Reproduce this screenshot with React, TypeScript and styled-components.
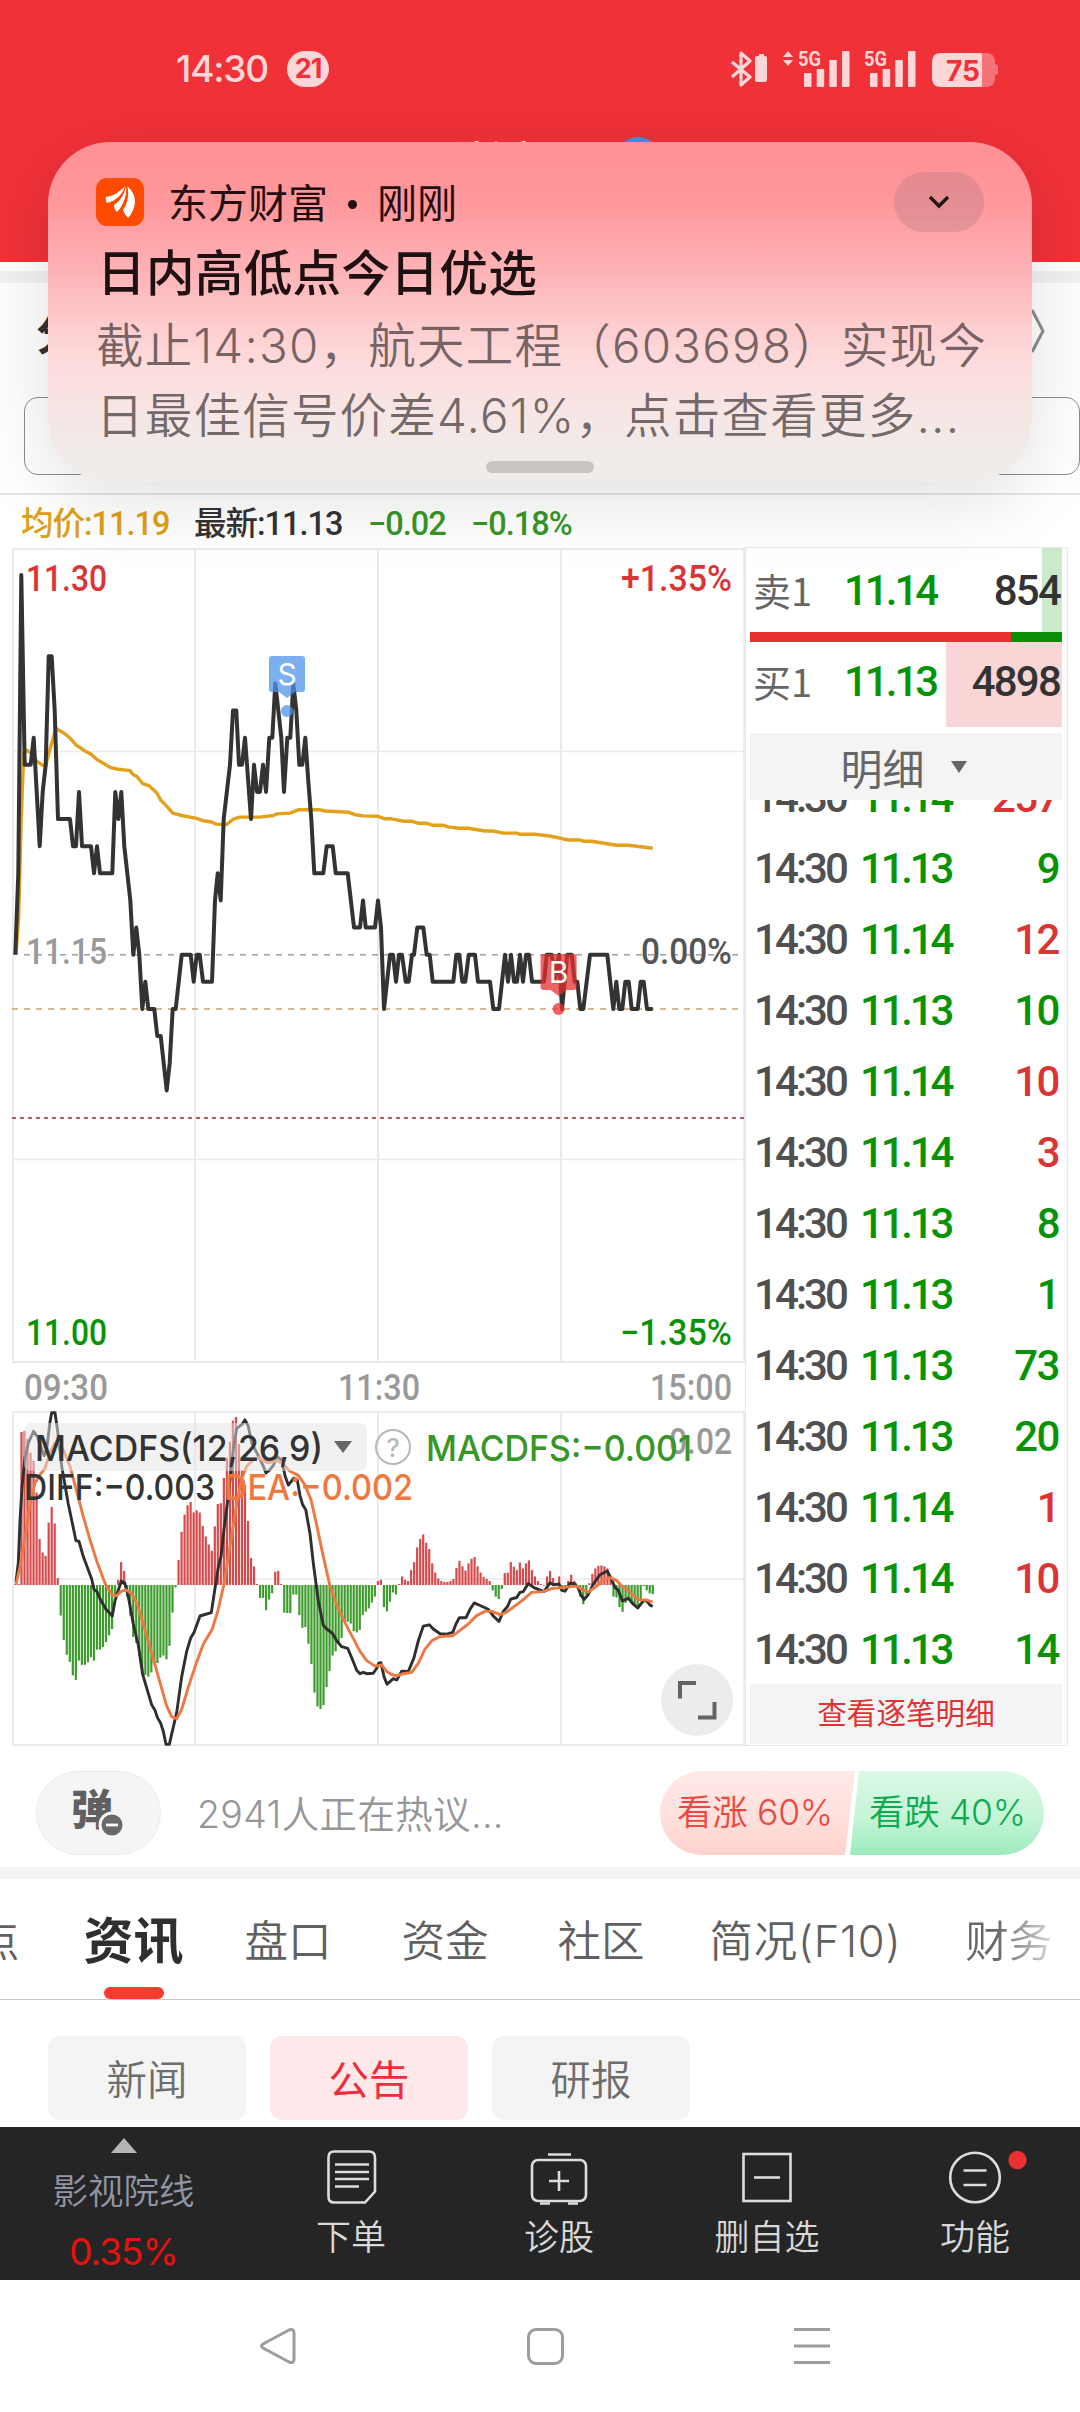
import React from "react";
import styled, { createGlobalStyle } from "styled-components";

const UI = `Inter, "Noto Sans CJK SC", sans-serif`;
const CJK = `"Noto Sans CJK SC", sans-serif`;
const NUM = `Roboto, "Noto Sans CJK SC", sans-serif`;

const RED = "#dc3434";
const GREEN = "#069406";

const Global = createGlobalStyle`
  html, body { margin: 0; padding: 0; background: #fff; }
  *, *::before, *::after { box-sizing: border-box; }
`;

const Screen = styled.div`
  position: relative;
  width: 1080px;
  height: 2412px;
  overflow: hidden;
  display: flex;
  flex-direction: column;
  background: #fff;
  font-family: ${UI};
`;

/* ---------- red header with status bar ---------- */

const Header = styled.header`
  height: 262px;
  flex: none;
  display: flex;
  flex-direction: column;
  background: #f13138;
`;

const StatusBar = styled.div`
  height: 137px;
  display: flex;
  align-items: center;
  justify-content: space-between;
  padding: 0 80px 0 176px;
`;

const StatusLeft = styled.div`
  display: flex;
  align-items: center;
  gap: 19px;
`;

const Clock = styled.span`
  font: 500 37px/44px ${UI};
  letter-spacing: -1.2px;
  color: #fdd6d8;
`;

const CountBadge = styled.span`
  width: 42px;
  height: 36px;
  border-radius: 18px;
  background: #fdd6d8;
  color: #f13138;
  font: 700 27px/36px ${UI};
  letter-spacing: -1px;
  text-align: center;
`;

const StockTitle = styled.div`
  display: flex;
  align-items: flex-start;
  justify-content: center;
  gap: 26px;
  padding-left: 38px;
  color: #fff;
  font: 500 44px/46px ${CJK};
`;

const BlueDot = styled.i`
  width: 44px;
  height: 44px;
  border-radius: 50%;
  background: #4a8fe8;
`;

/* ---------- period row hidden under the notification ---------- */

const Strip = styled.div<{ $h: number; $c: string }>`
  height: ${(p) => p.$h}px;
  flex: none;
  background: ${(p) => p.$c};
`;

const SectionRow = styled.div`
  height: 114px;
  flex: none;
  display: flex;
  align-items: center;
  justify-content: space-between;
  padding: 0 34px 18px 36px;
  color: #333;
  font: 700 44px/60px ${CJK};
`;

const PeriodBox = styled.div`
  height: 78px;
  flex: none;
  margin-left: 24px;
  border: 1.5px solid #8d8d8d;
  border-radius: 14px;
`;

const InfoRow = styled.div`
  height: 54px;
  margin-top: 18px;
  flex: none;
  border-top: 2px solid #e6e6e6;
  display: flex;
  align-items: center;
  padding: 6px 0 0 21px;
  font: 500 32.5px/40px ${NUM};
`;

const InfoItem = styled.span<{ $c: string; $w: number }>`
  width: ${(p) => p.$w}px;
  color: ${(p) => p.$c};
  letter-spacing: -1px;
  white-space: nowrap;
`;

/* ---------- notification ---------- */

const Notice = styled.section`
  position: absolute;
  left: 48px;
  top: 142px;
  width: 984px;
  height: 340px;
  border-radius: 62px;
  padding: 30px 48px 9px;
  display: flex;
  flex-direction: column;
  background: linear-gradient(
    180deg,
    #ff9095 0%,
    #fe989c 18%,
    #fea7ab 30%,
    #fdb9bc 42%,
    #fdcdcf 54%,
    #fddcdd 66%,
    #f7e5e4 78%,
    #f1eae8 88%,
    #efedeb 100%
  );
  box-shadow: 0 16px 76px rgba(0, 0, 0, 0.13);
`;

const NoticeHead = styled.div`
  display: flex;
  align-items: center;
  height: 60px;
`;

const AppName = styled.span`
  margin: -3px 0 0 24px;
  flex: 1;
  font: 400 40px/56px ${CJK};
  color: #240e0f;
  white-space: pre;
`;

const Dot = styled.i`
  display: inline-block;
  width: 9px;
  height: 9px;
  border-radius: 50%;
  background: #240e0f;
  margin: 0 20px 9px 20px;
`;

const Expand = styled.button`
  width: 90px;
  height: 60px;
  border: 0;
  border-radius: 30px;
  background: rgba(170, 120, 125, 0.3);
  display: flex;
  align-items: center;
  justify-content: center;
  padding: 0;
`;

const NoticeTitle = styled.div`
  height: 78px;
  font: 500 48.6px/76px ${CJK};
  letter-spacing: 0.3px;
  padding-left: 1px;
  color: #1f1012;
`;

const NoticeLine = styled.div`
  height: 70px;
  font: 350 47.5px/72px ${UI};
  letter-spacing: 1.22px;
  color: rgba(50, 40, 40, 0.68);
  white-space: nowrap;
`;

const Handle = styled.div`
  width: 108px;
  height: 12px;
  border-radius: 6px;
  margin: auto auto 0;
  background: #c9c6c4;
`;

/* ---------- market area ---------- */

const Market = styled.div`
  flex: none;
  display: flex;
  height: 1199px;
`;

const Charts = styled.div`
  width: 745px;
  flex: none;
`;

const Book = styled.aside`
  width: 323px;
  border: 1px solid #e8e8e8;
  display: flex;
  flex-direction: column;
  padding: 0 5px 0 4px;
`;

const QuoteRow = styled.div<{ $fill: number; $tint: string; $h: number; $pb: number }>`
  height: ${(p) => p.$h}px;
  flex: none;
  display: flex;
  align-items: center;
  justify-content: space-between;
  padding: 1px 2px ${(p) => p.$pb}px 3px;
  background: linear-gradient(${(p) => p.$tint}, ${(p) => p.$tint}) right / ${(p) => p.$fill}px 100% no-repeat;
  font: 500 42px/50px ${NUM};
  letter-spacing: -1.8px;
  color: #333;
`;

const Side = styled.span`
  width: 91px;
  margin-top: -2px;
  font: 400 38px/50px ${CJK};
  letter-spacing: 0;
  color: #666;
`;

const QuotePrice = styled.span`
  flex: 1;
  letter-spacing: -3px;
  color: ${GREEN};
`;

const Ratio = styled.div`
  height: 10px;
  flex: none;
  display: flex;
  background: #0a8f06;
  &::before {
    content: "";
    width: 261px;
    background: #e83030;
  }
`;

const DetailHead = styled.div`
  height: 67px;
  margin-top: 6px;
  flex: none;
  background: #f4f4f4;
  color: #666;
  display: flex;
  align-items: center;
  justify-content: center;
  gap: 26px;
  padding-right: 5px;
  font: 400 42px/60px ${CJK};
`;

const Caret = styled.i`
  border: 8.5px solid transparent;
  border-top: 12px solid #666;
  border-bottom: 0;
`;

const Ticks = styled.div`
  flex: 1;
  overflow: hidden;
  display: flex;
  flex-direction: column;
  justify-content: flex-end;
`;

const Tick = styled.div`
  height: 71px;
  flex: none;
  display: flex;
  align-items: center;
  padding: 2px 3px 0 4px;
  font: 500 42px/50px ${NUM};
  letter-spacing: -1.5px;
  color: #505050;
`;

const TickTime = styled.span`
  width: 106px;
  letter-spacing: -2.9px;
`;

const TickPrice = styled.span`
  flex: 1;
  letter-spacing: -3.2px;
  color: ${GREEN};
`;

const TickQty = styled.span<{ $up: boolean }>`
  color: ${(p) => (p.$up ? RED : GREEN)};
`;

const BookFoot = styled.div`
  height: 60px;
  margin-bottom: 1px;
  flex: none;
  background: #f4f4f4;
  color: ${RED};
  text-align: center;
  font: 400 29.6px/56px ${CJK};
`;

/* ---------- discussion bar ---------- */

const Talk = styled.div`
  flex: none;
  height: 121px;
  padding: 25px 36px 0;
  display: flex;
`;

const BulletButton = styled.div`
  width: 125px;
  height: 84px;
  border-radius: 42px;
  border: 1px solid #ececec;
  background: #f5f5f5;
  display: flex;
  padding: 11px 0 0 29px;
`;

const TalkText = styled.div`
  flex: 1;
  padding-left: 36px;
  font: 350 37.5px/88px ${UI};
  letter-spacing: 0.35px;
  color: #969696;
`;

const Votes = styled.div`
  width: 384px;
  height: 84px;
  display: flex;
`;

const Vote = styled.div<{ $up?: boolean }>`
  width: 195px;
  height: 84px;
  flex: none;
  margin-left: ${(p) => (p.$up ? 0 : -6)}px;
  border-radius: ${(p) => (p.$up ? "42px 0 0 42px" : "0 42px 42px 0")};
  clip-path: ${(p) =>
    p.$up ? "polygon(0 0, 100% 0, 185px 100%, 0 100%)" : "polygon(10px 0, 100% 0, 100% 100%, 1px 100%)"};
  background: ${(p) =>
    p.$up ? "linear-gradient(#ffeae8, #ffe0dd 55%, #ffd1cc)" : "linear-gradient(#dbf9e6, #c6f4d7 55%, #9cebbd)"};
  color: ${(p) => (p.$up ? "#ee473f" : "#0dab4f")};
  padding-left: ${(p) => (p.$up ? 17 : 20)}px;
  font: 350 35.5px/84px ${UI};
  letter-spacing: -0.3px;
  white-space: nowrap;
`;

/* ---------- tabs ---------- */

const Tabs = styled.nav`
  height: 121px;
  flex: none;
  display: flex;
  border-bottom: 1.5px solid #c8c8c8;
  overflow: hidden;
`;

const Tab = styled.div<{ $ml: number; $active?: boolean; $fade?: boolean }>`
  margin-left: ${(p) => p.$ml}px;
  flex: none;
  display: flex;
  flex-direction: column;
  align-items: center;
  justify-content: space-between;
  white-space: nowrap;
  font: ${(p) => (p.$active ? "700 50px/124px" : "350 43.5px/124px")} ${UI};
  color: ${(p) => (p.$active ? "#2f2f2f" : "#606060")};
  ${(p) =>
    p.$fade &&
    `background: linear-gradient(90deg, #666 35%, #d8d8d8 100%); background-clip: text; -webkit-background-clip: text; color: transparent;`}
`;

const LatinTab = styled.span`
  letter-spacing: 0.7px;
`;

const Underline = styled.i`
  width: 60px;
  height: 12px;
  border-radius: 6px;
  background: #fb3b30;
  margin-top: -16px;
  flex: none;
`;

const Filters = styled.div`
  height: 127px;
  flex: none;
  display: flex;
  gap: 24px;
  padding: 36px 48px 0;
`;

const Filter = styled.div<{ $active?: boolean }>`
  width: 198px;
  height: 84px;
  border-radius: 12px;
  background: ${(p) => (p.$active ? "#ffe8ea" : "#f4f4f4")};
  color: ${(p) => (p.$active ? "#ef2c3d" : "#6d6d6d")};
  text-align: center;
  font: ${(p) => (p.$active ? 400 : 350)} 40.5px/84px ${CJK};
`;

/* ---------- bottom bars ---------- */

const Dock = styled.footer`
  height: 153px;
  flex: none;
  background: #252525;
  display: flex;
`;

const Sector = styled.div`
  width: 247px;
  display: flex;
  flex-direction: column;
  align-items: center;
`;

const UpCaret = styled.i`
  margin-top: 11px;
  border: 13px solid transparent;
  border-bottom: 15px solid #b5b5b5;
  border-top: 0;
`;

const SectorName = styled.span`
  margin-top: 11px;
  font: 350 35.5px/50px ${CJK};
  color: #9195a6;
`;

const SectorPct = styled.span`
  margin-top: 13px;
  font: 400 37px/50px ${UI};
  letter-spacing: -1px;
  color: #e91010;
`;

const DockItem = styled.div`
  width: 208px;
  padding-top: 20px;
  display: flex;
  flex-direction: column;
  align-items: center;
  font: 350 35px/50px ${CJK};
  color: #d8d8d8;
  svg {
    flex: none;
    margin-bottom: 3px;
    overflow: visible;
  }
`;

const SystemNav = styled.div`
  height: 132px;
  flex: none;
  display: flex;
  padding: 46px 248px 0 258px;
  justify-content: space-between;
`;

/* ---------- chart data ---------- */

/* [x, ticks above the previous close] */
const price: number[][] = [
  [46,0],[55,3],[64,14],[74,7],[92,7],[101,8],[110,6],[119,4],[128,6],[137,7],[146,11],[155,11],[164,9],[174,5],[210,5],[219,4],[228,4],[237,6],[246,4],[273,4],[282,3],[291,4],[300,3],[337,3],[346,6],[355,5],[364,6],[373,4],[391,2],[400,0],[409,1],[418,0],[427,-2],[436,-1],[445,-2],[463,-2],[472,-3],[482,-3],[500,-5],[509,-4],[518,-2],[527,-2],[545,0],[572,0],[581,-1],[590,0],[599,0],[609,-1],[636,-1],[645,2],[653,3],[662,2],[671,5],[690,7],[699,9],[709,9],[717,7],[726,7],[735,8],[753,5],[762,7],[771,6],[780,6],[789,7],[798,6],[808,8],[817,8],[826,10],[835,9],[844,8],[852,6],[862,8],[871,8],[880,10],[889,9],[898,7],[907,7],[916,8],[925,6.4],[934,5],[943,3],[970,3],[980,4],[998,4],[1007,3],[1043,3],[1062,1],[1080,1],[1089,2],[1097,1],[1125,1],[1134,2],[1143,1],[1152,-2],[1170,0],[1179,0],[1188,-1],[1197,0],[1206,0],[1217,-1],[1226,-1],[1236,0],[1242,0],[1252,1],[1270,1],[1280,0],[1289,0],[1298,-1],[1360,-1],[1369,0],[1378,0],[1387,-1],[1396,-1],[1406,0],[1425,0],[1434,-1],[1470,-1],[1480,-2],[1497,-2],[1515,0],[1524,-1],[1533,0],[1542,-1],[1551,-1],[1560,0],[1569,-1],[1578,0],[1587,0],[1596,-1],[1632,-1],[1640,0],[1655,0],[1664,-1],[1677,0],[1686,-2],[1702,0],[1715,0],[1724,-1],[1732,-1],[1741,-2],[1750,-2],[1770,0],[1822,0],[1840,-2],[1849,-1],[1858,-2],[1867,-2],[1876,-1],[1886,-1],[1895,-2],[1913,-2],[1922,-1],[1931,-1],[1941,-2],[1958,-2],
];

const average: number[][] = [
  [48,1114],[56,1020],[63,800],[71,620],[80,613],[95,622],[110,640],[128,650],[137,650],[150,610],[168,560],[190,570],[210,583],[228,600],[255,615],[273,623],[291,636],[310,645],[330,655],[350,659],[390,663],[400,673],[410,677],[428,695],[447,700],[470,717],[482,735],[500,750],[518,767],[545,773],[590,780],[610,786],[635,789],[648,794],[680,795],[700,782],[720,777],[780,777],[820,773],[830,769],[870,767],[895,759],[960,759],[975,762],[1045,765],[1065,771],[1090,774],[1134,775],[1155,781],[1175,781],[1210,787],[1235,787],[1255,792],[1280,792],[1300,797],[1330,797],[1345,801],[1375,804],[1405,804],[1455,811],[1480,811],[1510,816],[1550,816],[1560,819],[1605,819],[1655,824],[1705,833],[1740,833],[1750,836],[1775,836],[1850,846],[1885,846],[1958,853],
];

const bars: number[] = [
  1150,1150,789,786,805,838,857,933,1043,1075,1083,1004,967,1006,1136,1225,1283,1318,1335,1367,1378,1332,1342,1342,1336,1324,1332,1306,1306,1300,1288,1272,1257,1180,1140,1098,1119,1180,1225,1276,1290,1320,1360,1366,1370,1360,1338,1338,1325,1320,1329,1297,1218,1158,1093,1026,985,963,955,980,975,980,1012,1037,1056,1071,1013,960,958,898,850,812,762,753,817,880,915,1000,1088,1108,1150,1183,1183,1212,1187,1172,1121,1119,1150,1218,1219,1219,1175,1175,1224,1254,1252,1292,1340,1408,1441,1447,1438,1395,1357,1320,1310,1293,1278,1240,1240,1244,1262,1265,1259,1224,1216,1208,1194,1180,1143,
  1140,1205,1215,1192,1170,1175,1150,1132,1140,1143,1117,1098,1063,1043,1032,1052,1067,1101,1123,1137,1143,1145,1145,1143,1138,1112,1095,1108,1118,1101,1090,1086,1108,1123,1133,1138,1143,1165,1180,1186,1162,1124,1123,1098,1109,1117,1099,1113,1101,1094,1117,1132,1143,1150,1154,1132,1119,1136,1148,1132,1158,1160,1143,1128,1143,1154,1180,1198,1175,1148,1126,1113,1107,1106,1108,1113,1135,1180,1182,1205,1216,1195,1186,1196,1198,1205,1190,1155,1165,1172,1174,
];

const diff: number[][] = [
  [48,1145],[55,1100],[60,1000],[66,920],[75,850],[85,815],[101,787],[112,800],[125,830],[133,845],[140,830],[150,765],[155,743],[165,743],[172,780],[185,870],[205,960],[228,1047],[237,1049],[250,1085],[275,1138],[282,1163],[291,1168],[300,1185],[318,1210],[337,1226],[345,1190],[355,1165],[364,1143],[374,1147],[385,1180],[400,1245],[415,1295],[428,1365],[445,1410],[455,1437],[465,1450],[472,1467],[482,1481],[490,1500],[498,1531],[508,1531],[520,1490],[530,1455],[545,1370],[560,1310],[572,1278],[582,1265],[600,1226],[634,1218],[645,1160],[655,1110],[663,1085],[672,1020],[685,940],[700,830],[710,780],[727,770],[735,760],[745,775],[755,815],[775,845],[790,870],[798,886],[808,880],[820,868],[832,848],[845,855],[855,893],[865,915],[875,905],[882,898],[892,903],[900,940],[908,962],[917,973],[930,1030],[940,1100],[955,1190],[970,1248],[980,1257],[998,1268],[1010,1285],[1025,1299],[1043,1303],[1055,1325],[1070,1355],[1080,1363],[1090,1360],[1100,1363],[1120,1362],[1130,1350],[1136,1338],[1143,1337],[1152,1370],[1161,1388],[1170,1382],[1180,1375],[1190,1378],[1205,1357],[1225,1358],[1242,1325],[1255,1285],[1270,1250],[1288,1247],[1300,1257],[1320,1268],[1340,1269],[1358,1265],[1368,1245],[1378,1230],[1398,1230],[1410,1210],[1423,1195],[1440,1201],[1465,1210],[1482,1228],[1497,1239],[1510,1215],[1523,1203],[1532,1186],[1550,1182],[1560,1170],[1570,1168],[1585,1149],[1605,1160],[1632,1168],[1650,1147],[1660,1152],[1677,1150],[1685,1165],[1695,1167],[1710,1148],[1725,1150],[1735,1160],[1742,1175],[1752,1187],[1765,1175],[1780,1150],[1800,1128],[1822,1119],[1832,1135],[1845,1158],[1855,1165],[1867,1190],[1885,1184],[1900,1198],[1913,1207],[1930,1190],[1940,1190],[1950,1200],[1958,1203],
];

const dea: number[][] = [
  [48,1150],[60,1110],[75,1040],[90,960],[105,910],[120,890],[135,875],[150,838],[165,815],[178,815],[192,835],[210,870],[230,930],[250,990],[270,1045],[290,1095],[315,1148],[335,1175],[350,1178],[362,1168],[378,1164],[395,1172],[412,1198],[430,1245],[450,1300],[475,1370],[500,1440],[515,1465],[530,1470],[545,1448],[565,1395],[590,1335],[610,1293],[637,1257],[655,1210],[672,1150],[690,1060],[710,960],[725,900],[740,870],[760,855],[775,850],[790,857],[805,862],[830,857],[845,862],[870,882],[895,892],[915,915],[933,950],[950,1010],[970,1085],[990,1155],[1010,1200],[1040,1250],[1055,1272],[1080,1310],[1100,1332],[1125,1345],[1145,1342],[1160,1358],[1175,1365],[1190,1368],[1210,1363],[1235,1360],[1255,1338],[1275,1305],[1295,1285],[1320,1275],[1358,1273],[1380,1260],[1405,1245],[1430,1225],[1455,1215],[1475,1215],[1500,1223],[1515,1219],[1540,1205],[1565,1190],[1595,1170],[1630,1168],[1655,1161],[1690,1158],[1730,1155],[1750,1165],[1765,1169],[1790,1155],[1810,1140],[1830,1135],[1850,1142],[1865,1155],[1880,1162],[1895,1173],[1915,1187],[1940,1188],[1958,1193],
];

const poly = (pts: number[][], fy: (v: number) => number) =>
  pts.map(([x, y]) => `${(x / 3).toFixed(1)},${fy(y).toFixed(1)}`).join(" ");

/* charts share one coordinate space whose origin is 547px below the screen top */
const priceY = (k: number) => 954.7 - k * 27.13 - 547;
const avgY = (v: number) => 500 + v / 2.45 - 547;
const macdY = (v: number) => 1100 + v / 2.376 - 547;

type LabelProps = { x: number; y: number; w: number; c: string; s?: number; f?: string; children: string };
const Label = ({ x, y, w, c, s = 36, f = NUM, children }: LabelProps) => (
  <text
    x={x}
    y={y - 547}
    textLength={w}
    lengthAdjust="spacingAndGlyphs"
    fill={c}
    style={{ fontFamily: f, fontSize: s, fontWeight: 500 }}
  >
    {children}
  </text>
);

const Marker = ({ x, y, c, t }: { x: number; y: number; c: string; t: string }) => (
  <g transform={`translate(${x} ${y - 547})`}>
    <path d="M-15 0H15Q18 0 18 3V33Q18 36 15 36H8L0 42L-8 36H-15Q-18 36 -18 33V3Q-18 0 -15 0Z" fill={c} />
    <circle cx="0" cy="55" r="6" fill={c} />
    <text x="0" y="28.5" textAnchor="middle" fill="#fff" style={{ fontFamily: UI, fontSize: 30 }}>
      {t}
    </text>
  </g>
);

const MarketChart = () => (
  <svg width="745" height="1199" viewBox="0 0 745 1199">
    <g stroke="#ebebeb" strokeWidth="2" fill="none">
      <rect x="13" y="2" width="731" height="813" />
      <rect x="13" y="865" width="731" height="333" />
      {[195, 378, 561].map((x) => (
        <path key={x} d={`M${x} 2V815M${x} 865V1198`} />
      ))}
      <path d="M13 204.5H744M13 612.5H744M13 1032H744" strokeWidth="1.3" />
    </g>
    <path d="M24 407.7H740" stroke="#a0a0a0" strokeWidth="1.6" strokeDasharray="6 6" />
    <path d="M12 462H740" stroke="#c9a569" strokeWidth="1.6" strokeDasharray="6 6" />
    <path d="M12 571H744" stroke="#b95865" strokeWidth="2" strokeDasharray="4 4" />

    <Label x={26} y={591} w={81} c={RED}>11.30</Label>
    <Label x={621} y={591} w={111} c={RED}>+1.35%</Label>
    <Label x={26} y={964} w={81} c="#999">11.15</Label>
    <Label x={641} y={964} w={91} c="#555">0.00%</Label>
    <Label x={26} y={1345} w={81} c={GREEN}>11.00</Label>
    <Label x={620} y={1345} w={112} c={GREEN}>−1.35%</Label>
    <Label x={24} y={1400} w={84} c="#999">09:30</Label>
    <Label x={338} y={1400} w={82} c="#999">11:30</Label>
    <Label x={650} y={1400} w={82} c="#999">15:00</Label>

    <polyline points={poly(average, avgY)} fill="none" stroke="#e3a11b" strokeWidth="3.4" strokeLinejoin="round" />
    <polyline points={poly(price, priceY)} fill="none" stroke="#333" strokeWidth="4" strokeLinejoin="round" />
    <Marker x={287} y={656} c="rgba(77,147,234,0.74)" t="S" />
    <Marker x={558.6} y={954} c="rgba(230,46,46,0.74)" t="B" />

    {bars.map((v, i) => {
      const x = (46 + (i * 1912) / (bars.length - 1)) / 3;
      const y = macdY(v);
      const up = v < 1152;
      return (
        <rect
          key={i}
          x={x - 1}
          y={up ? y : 1038}
          width="2.2"
          height={Math.max(0.5, Math.abs(y - 1038))}
          fill={up ? "#d64a4c" : "#3d9c2c"}
        />
      );
    })}
    <polyline points={poly(diff, macdY)} fill="none" stroke="#2f2f2f" strokeWidth="2.9" strokeLinejoin="round" />
    <polyline points={poly(dea, macdY)} fill="none" stroke="#ee7843" strokeWidth="2.9" strokeLinejoin="round" />

    <rect x="24" y="876" width="343" height="48" rx="7" fill="rgba(228,228,228,0.5)" />
    <Label x={35} y={1461} w={288} c="#333" f={UI}>MACDFS(12,26,9)</Label>
    <path d="M334 894H352L343 906Z" fill="#666" />
    <circle cx="393" cy="900" r="17" fill="none" stroke="#b8b8b8" strokeWidth="2" />
    <text x="393" y="909.5" textAnchor="middle" fill="#b8b8b8" style={{ fontFamily: UI, fontSize: 25, fontWeight: 500 }}>
      ?
    </text>
    <Label x={669} y={1454} w={63} c="#999">0.02</Label>
    <Label x={426} y={1461} w={266} c="#369627" f={UI}>MACDFS:−0.001</Label>
    <Label x={24} y={1500} w={191} c="#333" f={UI}>DIFF:−0.003</Label>
    <Label x={224} y={1500} w={189} c="#f0783f" f={UI}>DEA:−0.002</Label>

    <circle cx="697" cy="1153" r="36" fill="#ececec" />
    <path d="M680 1151.5V1136H696M698 1170.5H714.5V1155" fill="none" stroke="#636363" strokeWidth="4" />
  </svg>
);

/* ---------- icons ---------- */

const StatusIcons = () => (
  <svg width="270" height="44" viewBox="730 47 270 44" fill="#fdd6d8">
    <path
      d="M732 62L750 77L741 85V53L750 61L732 77"
      fill="none"
      stroke="#fdd6d8"
      strokeWidth="3.2"
      strokeLinejoin="round"
    />
    <path d="M759 54H764V56H765Q767 56 767 58V80Q767 82 765 82H757Q755 82 755 80V58Q755 56 757 56H759Z" />
    <path d="M783 57L788 51L793 57ZM783 60H793L788 66Z" />
    {[798, 864].map((x) => (
      <g key={x}>
        <text
          x={x}
          y="66"
          textLength="23"
          lengthAdjust="spacingAndGlyphs"
          style={{ fontFamily: NUM, fontSize: 21, fontWeight: 700 }}
        >
          5G
        </text>
        <rect x={x + 6} y="73" width="7.5" height="14" rx="1" />
        <rect x={x + 18.7} y="69" width="7.5" height="18" rx="1" />
        <rect x={x + 31.3} y="60" width="7.5" height="27" rx="1" />
        <rect x={x + 44} y="51" width="7.5" height="36" rx="1" />
      </g>
    ))}
    <path d="M941 53H982V87H941Q932 87 932 78V62Q932 53 941 53Z" />
    <path d="M982 53H986Q995 53 995 62V64Q998 64 998 67V72Q998 75 995 75V78Q995 87 986 87H982Z" opacity="0.4" />
    <text
      x="946"
      y="80.5"
      textLength="34"
      lengthAdjust="spacingAndGlyphs"
      fill="#f13138"
      style={{ fontFamily: UI, fontSize: 29, fontWeight: 700 }}
    >
      75
    </text>
  </svg>
);

const AppLogo = () => (
  <svg width="48" height="48" viewBox="0 0 48 48">
    <rect width="48" height="48" rx="11" fill="#ff4a00" />
    <path d="M10 19C17 18 24 14 29 8C27 16 20 23 11 25C9.5 23 9.5 21 10 19Z" fill="#fff" />
    <path d="M30 8.5C31 16 28 27 21 34C19 32 18 30 18 27C24 23 28 17 30 8.5Z" fill="#fff" />
    <path d="M31.5 8.5C35 11 39 17 39 23C39 29 36 36 32 40C30 38 28 35 27 32C32 25 33 17 31.5 8.5Z" fill="#fff" />
  </svg>
);

const BulletIcon = () => (
  <svg width="60" height="58" viewBox="0 0 60 58">
    <text x="5" y="42" fill="#606060" style={{ fontFamily: CJK, fontSize: 42, fontWeight: 900 }}>
      弹
    </text>
    <circle cx="46" cy="42" r="13.5" fill="#f5f5f5" />
    <circle cx="46" cy="42" r="10.5" fill="#6a6a6a" />
    <path d="M40 42H52" stroke="#fff" strokeWidth="2.8" />
  </svg>
);

const iconProps = { fill: "none", stroke: "#dcdcdc", strokeWidth: 2.6 };

const OrderIcon = () => (
  <svg width="58" height="60" viewBox="0 0 58 60" {...iconProps}>
    <path d="M12 4.5H47Q53 4.5 53 10.5V44.5L43 55.5H12Q6.5 55.5 6.5 49.5V10.5Q6.5 4.5 12 4.5Z" />
    <path d="M13 17.5H47M13 25H47M13 32H47M13 39.5H37" />
  </svg>
);

const DiagnoseIcon = () => (
  <svg width="58" height="60" viewBox="0 0 58 60" {...iconProps}>
    <rect x="2" y="13" width="54" height="41" rx="6" />
    <path d="M18 7.5H41M19 34H39M29 24V44" />
    <path d="M10 56.5H20M38 56.5H48" />
  </svg>
);

const RemoveIcon = () => (
  <svg width="58" height="60" viewBox="0 0 58 60" {...iconProps}>
    <rect x="5.5" y="7" width="47" height="47" />
    <path d="M16 30.5H42" />
  </svg>
);

const MoreIcon = () => (
  <svg width="58" height="60" viewBox="0 0 58 60" {...iconProps}>
    <circle cx="29" cy="30.5" r="24.8" />
    <path d="M17.5 23.5H40.5M17.5 38H40.5" />
    <circle cx="71.5" cy="13" r="9.2" fill="#ea3030" stroke="none" />
  </svg>
);

const ticks: [string, string, boolean][] = [
  ["11.14", "257", true],
  ["11.13", "9", false],
  ["11.14", "12", true],
  ["11.13", "10", false],
  ["11.14", "10", true],
  ["11.14", "3", true],
  ["11.13", "8", false],
  ["11.13", "1", false],
  ["11.13", "73", false],
  ["11.13", "20", false],
  ["11.14", "1", true],
  ["11.14", "10", true],
  ["11.13", "14", false],
];

export default function App() {
  return (
    <Screen>
      <Global />
      <Header>
        <StatusBar>
          <StatusLeft>
            <Clock>14:30</Clock>
            <CountBadge>21</CountBadge>
          </StatusLeft>
          <StatusIcons />
        </StatusBar>
        <StockTitle>
          浙文影
          <BlueDot />
        </StockTitle>
      </Header>
      <Strip $h={9} $c="#fff" />
      <Strip $h={12} $c="#f2f2f2" />
      <SectionRow>
        <span>分时</span>
        <svg width="16" height="44" viewBox="0 0 16 44" fill="none" stroke="#8d8d8d" strokeWidth="3">
          <path d="M2 1L13 22L2 43" />
        </svg>
      </SectionRow>
      <PeriodBox />
      <InfoRow>
        <InfoItem $c="#e0a016" $w={173}>均价:11.19</InfoItem>
        <InfoItem $c="#333" $w={174}>最新:11.13</InfoItem>
        <InfoItem $c="#369627" $w={103}>−0.02</InfoItem>
        <InfoItem $c="#369627" $w={120}>−0.18%</InfoItem>
      </InfoRow>

      <Market>
        <Charts>
          <MarketChart />
        </Charts>
        <Book>
          <QuoteRow $h={84} $fill={20} $tint="#cbe9cb" $pb={0}>
            <Side>卖1</Side>
            <QuotePrice>11.14</QuotePrice>
            854
          </QuoteRow>
          <Ratio />
          <QuoteRow $h={85} $fill={116} $tint="#f9d6d6" $pb={6}>
            <Side>买1</Side>
            <QuotePrice>11.13</QuotePrice>
            4898
          </QuoteRow>
          <DetailHead>
            明细
            <Caret />
          </DetailHead>
          <Ticks>
            {ticks.map(([p, q, up], i) => (
              <Tick key={i}>
                <TickTime>14:30</TickTime>
                <TickPrice>{p}</TickPrice>
                <TickQty $up={up}>{q}</TickQty>
              </Tick>
            ))}
          </Ticks>
          <BookFoot>查看逐笔明细</BookFoot>
        </Book>
      </Market>

      <Talk>
        <BulletButton>
          <BulletIcon />
        </BulletButton>
        <TalkText>2941人正在热议...</TalkText>
        <Votes>
          <Vote $up>看涨 60%</Vote>
          <Vote>看跌 40%</Vote>
        </Votes>
      </Talk>
      <Strip $h={12} $c="#f4f4f4" />
      <Tabs>
        <Tab $ml={-24}>点</Tab>
        <Tab $ml={64} $active>
          资讯
          <Underline />
        </Tab>
        <Tab $ml={61}>盘口</Tab>
        <Tab $ml={70}>资金</Tab>
        <Tab $ml={69}>社区</Tab>
        <Tab $ml={65}>
          <LatinTab>简况(F10)</LatinTab>
        </Tab>
        <Tab $ml={64} $fade>财务</Tab>
      </Tabs>
      <Filters>
        <Filter>新闻</Filter>
        <Filter $active>公告</Filter>
        <Filter>研报</Filter>
      </Filters>
      <Dock>
        <Sector>
          <UpCaret />
          <SectorName>影视院线</SectorName>
          <SectorPct>0.35%</SectorPct>
        </Sector>
        <DockItem>
          <OrderIcon />
          下单
        </DockItem>
        <DockItem>
          <DiagnoseIcon />
          诊股
        </DockItem>
        <DockItem>
          <RemoveIcon />
          删自选
        </DockItem>
        <DockItem>
          <MoreIcon />
          功能
        </DockItem>
      </Dock>
      <SystemNav>
        <svg width="40" height="40" viewBox="0 0 40 40" fill="none" stroke="#9d9d9d" strokeWidth="3">
          <path d="M31 4L5 18Q2 20 5 22L31 36Q36 38 36 33V7Q36 2 31 4Z" />
        </svg>
        <svg width="40" height="40" viewBox="0 0 40 40" fill="none" stroke="#9d9d9d" strokeWidth="3">
          <rect x="3.5" y="3.5" width="34" height="34" rx="7.5" />
        </svg>
        <svg width="40" height="40" viewBox="0 0 40 40" fill="none" stroke="#9d9d9d" strokeWidth="3">
          <path d="M2 3.5H38M2 20H38M2 36.5H38" />
        </svg>
      </SystemNav>

      <Notice>
        <NoticeHead>
          <AppLogo />
          <AppName>
            东方财富
            <Dot />
            刚刚
          </AppName>
          <Expand>
            <svg width="24" height="16" viewBox="0 0 24 16" fill="none" stroke="#241516" strokeWidth="3.4">
              <path d="M3 3L12 12L21 3" />
            </svg>
          </Expand>
        </NoticeHead>
        <NoticeTitle>日内高低点今日优选</NoticeTitle>
        <NoticeLine>截止14:30，航天工程（603698）实现今</NoticeLine>
        <NoticeLine>日最佳信号价差4.61%，点击查看更多...</NoticeLine>
        <Handle />
      </Notice>
    </Screen>
  );
}
